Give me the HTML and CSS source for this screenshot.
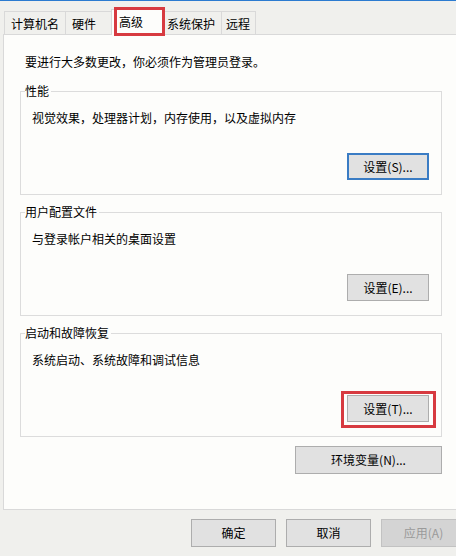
FILE: index.html
```html
<!DOCTYPE html>
<html lang="zh-CN">
  <head>
    <meta charset="UTF-8" />
    <meta name="viewport" content="width=device-width, initial-scale=1.0" />
    <title>系统属性</title>
    <link rel="stylesheet" href="styles.css">
  </head>
  <body>
    <div class="dialog">
      <div class="tabs">
        <div class="tab">计算机名</div>
        <div class="tab">硬件</div>
        <div class="tab tab-active mark">高级</div>
        <div class="tab">系统保护</div>
        <div class="tab tab-last">远程</div>
      </div>
      <div class="panel">
        <p class="intro">要进行大多数更改，你必须作为管理员登录。</p>

        <fieldset class="group">
          <legend>性能</legend>
          <p>视觉效果，处理器计划，内存使用，以及虚拟内存</p>
          <div class="actions">
            <button class="btn btn-default">设置(S)...</button>
          </div>
        </fieldset>

        <fieldset class="group">
          <legend>用户配置文件</legend>
          <p>与登录帐户相关的桌面设置</p>
          <div class="actions">
            <button class="btn">设置(E)...</button>
          </div>
        </fieldset>

        <fieldset class="group">
          <legend>启动和故障恢复</legend>
          <p>系统启动、系统故障和调试信息</p>
          <div class="actions">
            <button class="btn mark mark-btn">设置(T)...</button>
          </div>
        </fieldset>

        <div class="env">
          <button class="btn btn-wide">环境变量(N)...</button>
        </div>
      </div>
      <div class="footer">
        <button class="btn btn-footer">确定</button>
        <button class="btn btn-footer">取消</button>
        <button class="btn btn-footer" disabled>应用(A)</button>
      </div>
    </div>
  </body>
</html>
```

FILE: styles.css
```css
html {
  background-color: #f0f0ed;
  font-family: "Noto Sans CJK SC", sans-serif;
  font-size: 12px;
  color: #000000;
}

body {
  margin: 0;
  padding: 0;
  border-top: 1px solid #2b7bd0;
  overflow: hidden;
}

.dialog {
  width: 476px;
  box-sizing: border-box;
  padding: 0 10px 0 3px;
}

/* tabs */
.tabs {
  display: flex;
  align-items: flex-end;
  padding: 8px 0 0 1px;
  height: 25px;
}

.tab {
  box-sizing: border-box;
  display: flex;
  align-items: center;
  height: 23px;
  min-width: 48px;
  padding: 1px 6px 0;
  margin-left: -1px;
  border: 1px solid #d9d9d9;
  border-bottom: none;
  background-color: #f0f0ed;
  line-height: 16px;
}

.tab:first-child {
  margin-left: 0;
}

.tab-last {
  min-width: 0;
  padding: 1px 5px 0 4px;
}

.tab-active {
  position: relative;
  z-index: 1;
  height: 26px;
  width: 52px;
  margin: 0 -2px -1px -2px;
  padding: 0 7px 2px;
  background-color: #fdfdfb;
}

/* red highlight boxes */
.mark {
  position: relative;
}

.mark::after {
  content: "";
  position: absolute;
  left: 2px;
  right: -3px;
  top: -3px;
  bottom: -1px;
  border: 3px solid #d73a40;
  pointer-events: none;
}

.mark-btn::after {
  left: -7px;
  right: -8px;
  top: -5px;
  bottom: -7px;
}

/* panel */
.panel {
  width: 456px;
  box-sizing: border-box;
  background-color: #fdfdfb;
  border: 1px solid #d9d9d9;
  border-right: none;
  padding: 19px 17px 35px 16px;
}

p {
  margin: 0;
  line-height: 16px;
}

.intro {
  padding-left: 5px;
  margin-bottom: 13px;
}

.group {
  margin: 0 0 9px;
  padding: 0 0 14px 4px;
  border: 1px solid #dcdcdc;
}

.group legend {
  padding: 0 2px 0 0;
  line-height: 16px;
}

.group p {
  margin: 11px 0 0 7px;
}

.actions {
  display: flex;
  justify-content: flex-end;
  margin: 27px 12px 0 0;
}

.env {
  display: flex;
  justify-content: flex-end;
  margin-top: 8px;
}

/* buttons */
.btn {
  box-sizing: border-box;
  width: 82px;
  height: 27px;
  padding: 0;
  font-family: "Noto Sans CJK SC", sans-serif;
  font-size: 12px;
  line-height: 16px;
  color: #000000;
  background-color: #e1e1e1;
  border: 1px solid #adadad;
  border-radius: 0;
}

.btn-default {
  border: 2px solid #3a7cc4;
}

.btn-wide {
  width: 147px;
  height: 28px;
}

.footer {
  display: flex;
  justify-content: flex-end;
  gap: 10px;
  margin-top: 9px;
}

.btn-footer {
  width: 85px;
  height: 28px;
}

.btn:disabled {
  background-color: #d4d4d4;
  border-color: #c2c2c2;
  color: #9a9a9a;
}
```
